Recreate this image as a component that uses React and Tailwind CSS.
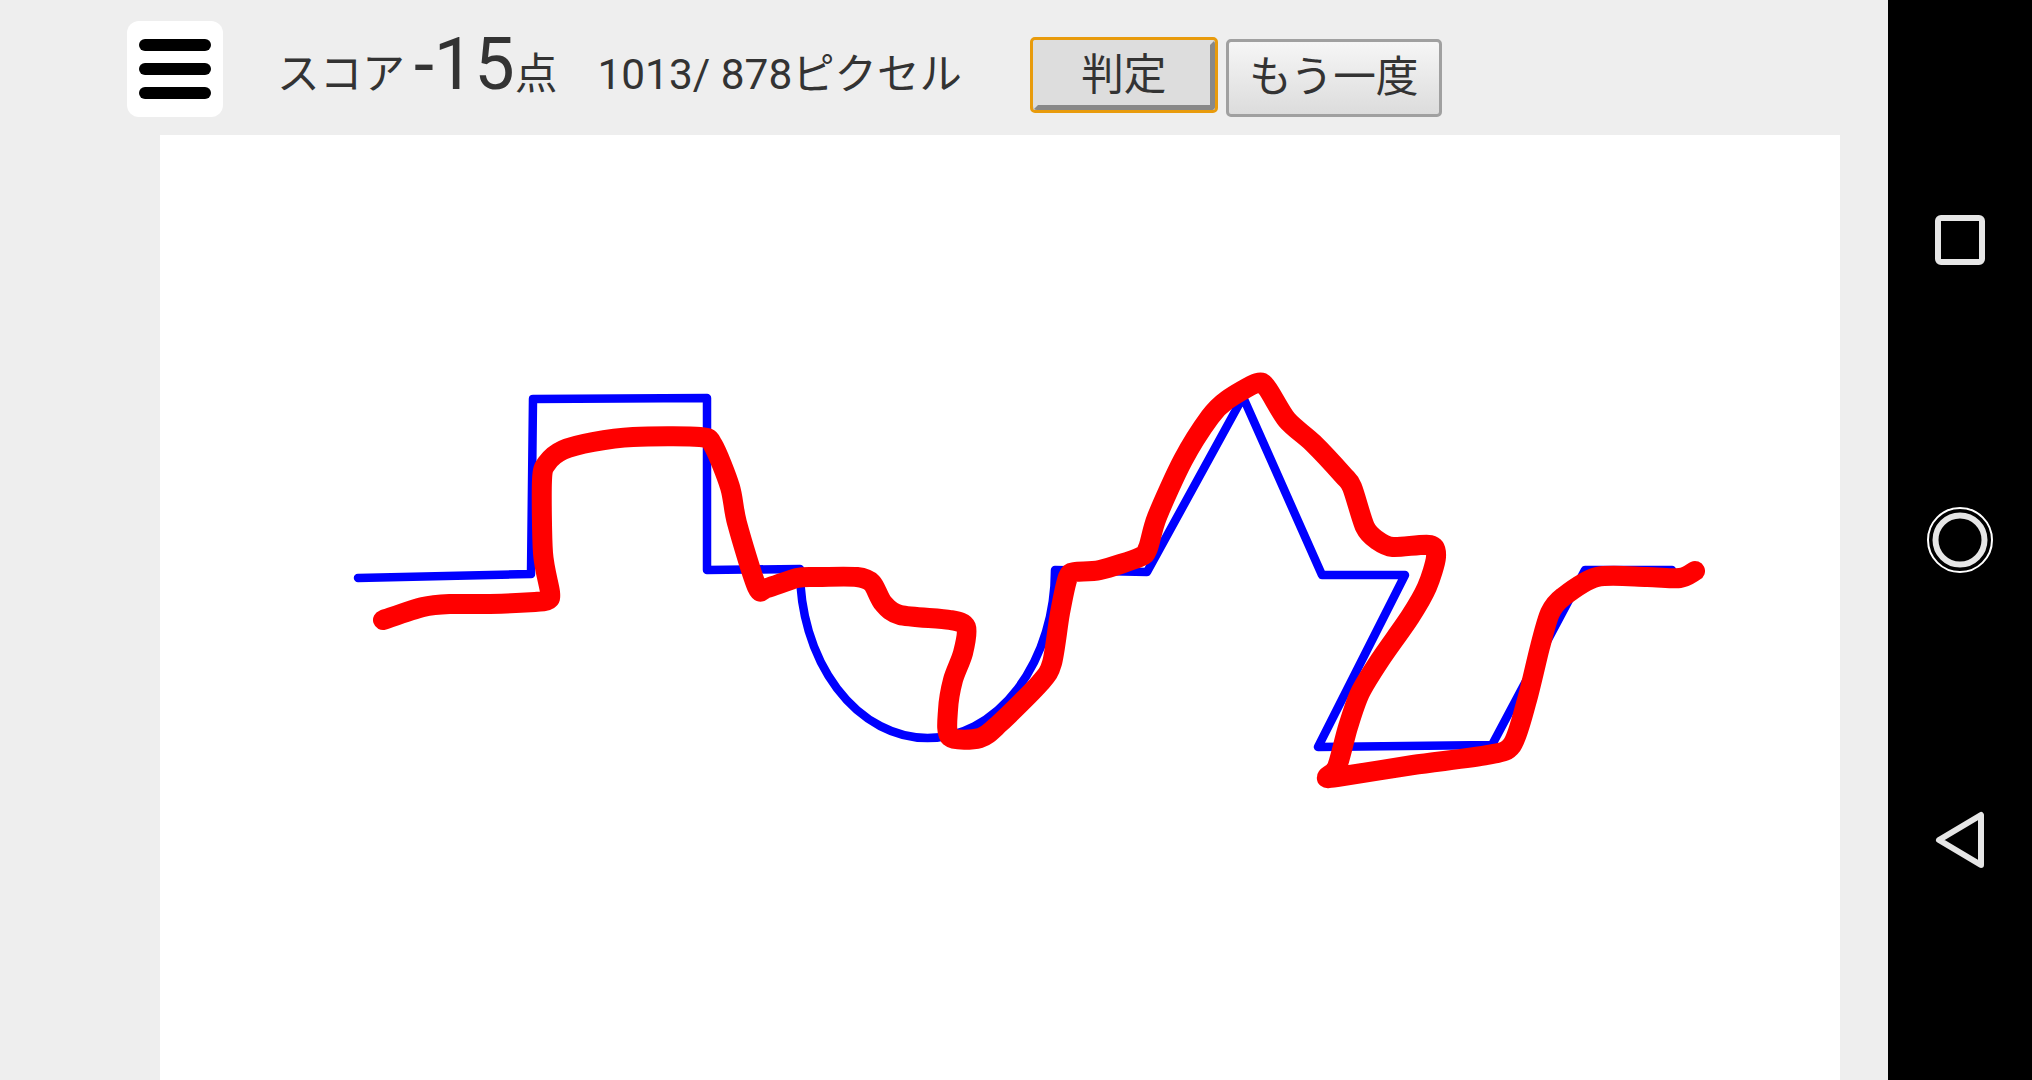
import React from "react";

const red = [[383,620],[423,607],[450,604],[490,604],[535,602],[548,600],[550,592],[543,553],[542,480],[547,463],[563,450],[593,442],[633,437],[700,437],[713,445],[730,487],[737,523],[757,587],[767,588],[797,578],[817,577],[857,577],[872,583],[883,603],[900,615],[950,620],[966,627],[963,653],[953,680],[948,710],[950,737],[980,738],[1000,723],[1040,683],[1052,663],[1060,613],[1068,577],[1075,572],[1100,570],[1140,557],[1148,548],[1157,517],[1183,460],[1210,417],[1227,400],[1257,383],[1267,388],[1287,420],[1313,443],[1343,475],[1352,487],[1365,527],[1377,540],[1393,547],[1430,545],[1436,557],[1427,587],[1410,617],[1380,660],[1360,693],[1348,727],[1337,767],[1327,777],[1337,777],[1413,765],[1487,755],[1512,745],[1527,700],[1540,647],[1550,613],[1563,597],[1597,577],[1647,577],[1680,578],[1695,571]];

function smooth(p) {
  let d = `M${p[0][0]} ${p[0][1]}`;
  for (let i = 0; i < p.length - 1; i++) {
    const a = p[Math.max(i - 1, 0)], b = p[i], c = p[i + 1], e = p[Math.min(i + 2, p.length - 1)];
    const k = 0.14;
    d += ` C${b[0] + (c[0] - a[0]) * k} ${b[1] + (c[1] - a[1]) * k} ${c[0] - (e[0] - b[0]) * k} ${c[1] - (e[1] - b[1]) * k} ${c[0]} ${c[1]}`;
  }
  return d;
}

const font = { fontFamily: 'Roboto, "Noto Sans CJK JP", sans-serif' };

export default function App() {
  return (
    <div className="flex h-screen w-full overflow-hidden bg-[#eeeeee] text-[#333333]" style={font}>
      <main className="flex min-w-0 flex-1 flex-col">
        <header className="flex h-[135px] shrink-0 items-start pl-[127px] pt-[21px]">
          <button className="flex h-24 w-24 shrink-0 flex-col items-center justify-center gap-3 rounded-xl bg-white">
            <span className="h-3 w-[72px] rounded-full bg-black" />
            <span className="h-3 w-[72px] rounded-full bg-black" />
            <span className="h-3 w-[72px] rounded-full bg-black" />
          </button>
          <div className="ml-[54px] flex h-[96px] items-baseline whitespace-nowrap text-[42.67px] leading-[88px]">
            <span>スコア</span>
            <span className="ml-[9px] text-[72px] leading-[88px]">-15</span>
            <span>点</span>
            <span className="ml-[40px] text-[42.4px]">1013/ 878ピクセル</span>
          </div>
          <button className="ml-[68px] mt-[16px] h-[76px] w-[188px] shrink-0 rounded-[5px] border-[3px] border-[#e89b0c] bg-[#dddddd] text-[42.67px] leading-none">
            <span className="flex h-full w-full items-center justify-center rounded-[4px] border-[5px] border-t-[#dddddd] border-l-[#dddddd] border-r-[#888888] border-b-[#888888]">判定</span>
          </button>
          <button className="ml-[8px] mt-[18px] flex h-[78px] w-[216px] shrink-0 items-center justify-center rounded-[5px] border-[3px] border-[#a0a0a0] bg-gradient-to-b from-[#f6f6f6] to-[#dcdcdc] pb-[2px] text-[42.67px] leading-none">
            もう一度
          </button>
        </header>
        <div className="ml-[160px] w-[1680px] flex-1 bg-white">
          <svg viewBox="160 135 1680 945" className="block h-full w-full blur-[0.5px]" fill="none" strokeLinejoin="round" strokeLinecap="round">
            <path d="M358 578 L531 574 L533 399 L707 398 L707 570 L800 569 A127.5 168 0 0 0 927.5 738 A127.5 168 0 0 0 1055 570 L1147 572 L1243 397 L1322 575 L1405 575 L1318 747 L1492 745 L1585 570 L1672 570" stroke="#0000ff" strokeWidth="8.5" />
            <path d={smooth(red)} stroke="#ff0000" strokeWidth="20" />
          </svg>
        </div>
      </main>
      <aside className="flex h-full w-[144px] shrink-0 items-center justify-center bg-black">
        <svg width="144" height="1080" viewBox="1888 0 144 1080" fill="none">
          <rect x="1938" y="218" width="44" height="44" rx="3" stroke="#e6e6e6" strokeWidth="6" />
          <circle cx="1960" cy="540" r="32" stroke="#ffffff" strokeWidth="2" />
          <circle cx="1960" cy="540" r="24.5" stroke="#e6e6e6" strokeWidth="6" />
          <path d="M1981 815 L1981 865 L1939 840 Z" stroke="#e6e6e6" strokeWidth="6" strokeLinejoin="round" />
        </svg>
      </aside>
    </div>
  );
}
